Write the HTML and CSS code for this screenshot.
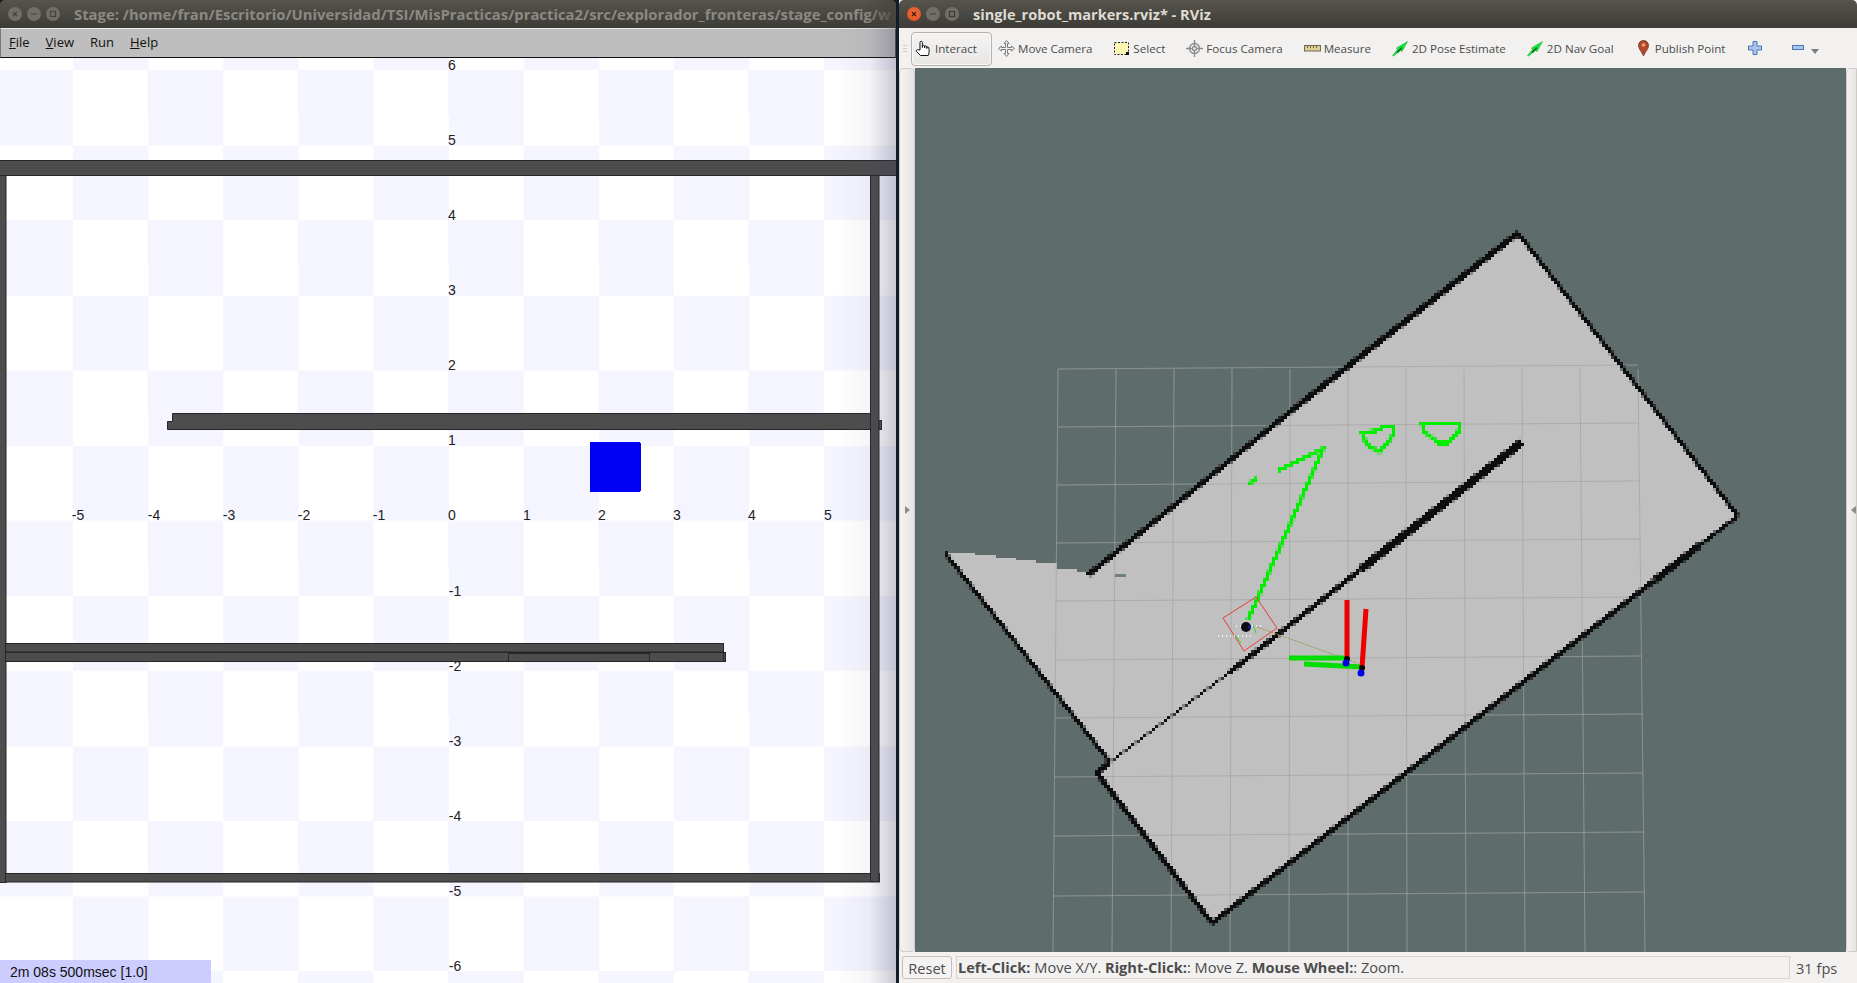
FILE: index.html
```html
<!DOCTYPE html>
<html lang="es">
<head>
<meta charset="utf-8">
<title>Stage and RViz</title>
<link rel="stylesheet" href="styles.css">
</head>
<body>
<div class="desktop">
  <section class="stage">
    <header class="titlebar titlebar-stage">
      <div class="winbtns">
        <span class="winbtn"><svg viewBox="0 0 14 14"><path class="mark-dim" d="M5 5l4 4M9 5l-4 4"/></svg></span>
        <span class="winbtn"><svg viewBox="0 0 14 14"><path class="mark-dim" d="M4 7h6"/></svg></span>
        <span class="winbtn"><svg viewBox="0 0 14 14"><rect class="mark-dim" x="4.5" y="4.5" width="5" height="5"/></svg></span>
      </div>
      <div class="title title-dim">Stage: /home/fran/Escritorio/Universidad/TSI/MisPracticas/practica2/src/explorador_fronteras/stage_config/w</div>
    </header>
    <nav class="menubar">
      <span class="menu"><u>F</u>ile</span>
      <span class="menu"><u>V</u>iew</span>
      <span class="menu">Run</span>
      <span class="menu"><u>H</u>elp</span>
    </nav>
    <div class="world">
      <svg class="world-svg" viewBox="0 58 896 925" width="896" height="925">
        <rect class="wall" x="-2" y="160.5" width="900" height="15"/>
        <rect class="wall" x="-2" y="175.5" width="8" height="707"/>
        <rect class="wall" x="5.5" y="873.5" width="874" height="8.5"/>
        <rect class="wall" x="870.5" y="175.5" width="8.5" height="706"/>
        <path class="wall" d="M172.5 413.5H870.5V429.500H167.500V421.500H172.500Z"/>
        <rect class="wall" x="879" y="420.5" width="2.5" height="9"/>
        <rect class="wall" x="5.5" y="643.5" width="718" height="8.5"/>
        <rect class="wall" x="5.5" y="652.5" width="718" height="9"/>
        <rect class="wall" x="723.5" y="652.5" width="2" height="9"/>
        <rect class="wall" x="508.5" y="653.5" width="141" height="8"/>
        <path class="blue" d="M590 442H640V443H641V491H640V492H590Z"/>
        <text class="lbl" x="78" y="520">-5</text><text class="lbl" x="154" y="520">-4</text><text class="lbl" x="229" y="520">-3</text><text class="lbl" x="304" y="520">-2</text><text class="lbl" x="379" y="520">-1</text><text class="lbl" x="452" y="520">0</text><text class="lbl" x="527" y="520">1</text><text class="lbl" x="602" y="520">2</text><text class="lbl" x="677" y="520">3</text><text class="lbl" x="752" y="520">4</text><text class="lbl" x="828" y="520">5</text>
        <text class="lbl" x="452" y="70">6</text><text class="lbl" x="452" y="145">5</text><text class="lbl" x="452" y="220">4</text><text class="lbl" x="452" y="295">3</text><text class="lbl" x="452" y="370">2</text><text class="lbl" x="452" y="445">1</text>
        <text class="lbl" x="455" y="596">-1</text><text class="lbl" x="455" y="671">-2</text><text class="lbl" x="455" y="746">-3</text><text class="lbl" x="455" y="821">-4</text><text class="lbl" x="455" y="896">-5</text><text class="lbl" x="455" y="971">-6</text>
      </svg>
      <div class="clock">2m 08s 500msec [1.0]</div>
    </div>
    <div class="shadow"></div>
  </section>
  <div class="gap"></div>
  <section class="rviz">
    <header class="titlebar">
      <div class="winbtns">
        <span class="winbtn winbtn-close"><svg viewBox="0 0 14 14"><path class="mark-close" d="M5 5l4 4M9 5l-4 4"/></svg></span>
        <span class="winbtn"><svg viewBox="0 0 14 14"><path class="mark" d="M4 7h6"/></svg></span>
        <span class="winbtn"><svg viewBox="0 0 14 14"><rect class="mark" x="4.5" y="4.5" width="5" height="5"/></svg></span>
      </div>
      <div class="title title-rviz">single_robot_markers.rviz* - RViz</div>
    </header>
    <div class="toolbar">
      <div class="grip"></div>
      <div class="tool tool-active">
        <svg class="icon" viewBox="0 0 17 17"><path class="hand" d="M5 10V2.500a1.200 1.200 0 0 1 2.400 0V7.500V6.500a1.100 1.100 0 0 1 2.200 0V8V7a1.100 1.100 0 0 1 2.200 0V8.500V8a1 1 0 0 1 2 0c.6 2.500 .4 5-.6 7.500H5.500L1.500 11.500c-.8-1 .5-2.400 1.600-1.700Z"/></svg>
        <span>Interact</span>
      </div>
      <div class="tool tool-move">
        <svg class="icon" viewBox="0 0 17 17"><path class="move" d="M8.500 .5L11 3.500H9.500V7.500H13.500V6L16.500 8.500L13.500 11V9.500H9.500V13.500H11L8.500 16.500L6 13.500H7.500V9.500H3.500V11L.5 8.500L3.500 6V7.500H7.500V3.500H6Z"/></svg>
        <span>Move Camera</span>
      </div>
      <div class="tool">
        <svg class="icon" viewBox="0 0 17 17"><rect class="select" x="1.500" y="2.500" width="14" height="12"/><rect class="select-h" x="13" y="12" width="3" height="3"/></svg>
        <span>Select</span>
      </div>
      <div class="tool">
        <svg class="icon" viewBox="0 0 17 17"><circle class="focus" cx="8.500" cy="8.500" r="5"/><circle class="focus" cx="8.500" cy="8.500" r="2"/><path class="focus" d="M8.500 0V6M8.500 11V17M0 8.500H6M11 8.500H17"/></svg>
        <span>Focus Camera</span>
      </div>
      <div class="tool">
        <svg class="icon" viewBox="0 0 17 17"><rect class="ruler" x=".5" y="5.500" width="16" height="5.500"/><path class="ruler-ticks" d="M3.500 6V8M6.500 6V8M9.500 6V8M12.500 6V8"/></svg>
        <span>Measure</span>
      </div>
      <div class="tool">
        <svg class="icon" viewBox="0 0 17 17"><path class="goal" d="M.5 15.500L5.500 9.500L4.500 8L15.500 1.500L10 11.500L8.500 10.500L1.500 16Z"/><path class="goal-line" d="M5 12.500L10 7.500"/></svg>
        <span>2D Pose Estimate</span>
      </div>
      <div class="tool">
        <svg class="icon" viewBox="0 0 17 17"><path class="goal" d="M.5 15.500L5.500 9.500L4.500 8L15.500 1.500L10 11.500L8.500 10.500L1.500 16Z"/><path class="goal-line" d="M5 12.500L10 7.500"/></svg>
        <span>2D Nav Goal</span>
      </div>
      <div class="tool tool-pin">
        <svg class="icon" viewBox="0 0 17 17"><path class="pin" d="M8.500 .5C5.500 .5 3.500 2.700 3.500 5.500C3.500 9 7 12 8.500 16C10 12 13.500 9 13.500 5.500C13.500 2.700 11.500 .5 8.500 .5Z"/><circle class="pin-dot" cx="8.500" cy="5" r="1.800"/></svg>
        <span>Publish Point</span>
      </div>
      <svg class="icon icon-plus" viewBox="0 0 14 14"><path class="plusmin" d="M5 .5H9V5H13.500V9H9V13.500H5V9H.5V5H5Z"/></svg>
      <svg class="icon icon-minus" viewBox="0 0 12 6"><rect class="plusmin" x=".5" y=".5" width="11" height="4"/></svg>
      <span class="drop"></span>
    </div>
    <div class="middle">
      <div class="handle"><span class="tri tri-right"></span></div>
      <svg class="view" viewBox="915 68 931 884" width="931" height="884">
        <defs>
          <filter id="cells" filterUnits="userSpaceOnUse" x="915" y="68" width="931" height="884">
            <feFlood x="916" y="69" width="1" height="1"/>
            <feComposite width="3" height="3"/>
            <feTile result="grain"/>
            <feComposite in="SourceGraphic" in2="grain" operator="in"/>
            <feMorphology operator="dilate" radius="1"/>
          </filter>
        </defs>
        <g class="grid">
          <path d="M1058 369L1053 952M1116 369L1112 952M1174 369L1171 952M1232 369L1230 952M1290 369L1289 952M1348 369L1348 952M1406 369L1407 952M1464 369L1466 952M1522 369L1525 952M1580 369L1585 952M1638 369L1645 952"/>
          <path d="M1058 369L1638 365M1058 427L1639 423M1057 485L1640 481M1057 543L1640 539M1056 601L1641 597M1056 660L1642 656M1055 718L1643 714M1054 777L1643 773M1054 836L1644 832M1053 896L1645 892"/>
        </g>
        <path class="free" d="M945 553H975V555H996V558H1016V560H1036V563H1057V569H1077V572H1088V575L1518 233L1738 516L1212 923L1097 773L1110 762Z"/>
        <g class="grid grid-free">
          <path d="M1058 369L1053 952M1116 369L1112 952M1174 369L1171 952M1232 369L1230 952M1290 369L1289 952M1348 369L1348 952M1406 369L1407 952M1464 369L1466 952M1522 369L1525 952M1580 369L1585 952M1638 369L1645 952"/>
          <path d="M1058 369L1638 365M1058 427L1639 423M1057 485L1640 481M1057 543L1640 539M1056 601L1641 597M1056 660L1642 656M1055 718L1643 714M1054 777L1643 773M1054 836L1644 832M1053 896L1645 892"/>
        </g>
        <g class="obst">
          <path class="w4" d="M945 553L1110 762"/>
          <path class="w5" d="M1110 762L1097 773L1212 923"/>
          <path class="w5" d="M1088 575L1300 404"/>
          <path class="w6" d="M1300 404L1518 233"/>
          <path class="w4" d="M1518 233L1738 516"/>
          <path class="w4" d="M1738 516L1700 545"/>
          <path class="w7" d="M1700 545L1655 580"/>
          <path class="w5" d="M1655 580L1212 923"/>
          <path class="w2" d="M1110 762L1230 672"/>
          <path class="w5" d="M1230 672L1360 570"/>
          <path class="w8" d="M1360 570L1522 442"/>
        </g>
        <rect class="spot" x="1115" y="574" width="11" height="3"/>
        <g class="path">
          <path d="M1248 620L1323 449L1277 471"/>
          <path d="M1248 484L1258 478"/>
          <path d="M1362 433L1375 431L1385 426H1394V434L1380 452L1367 445Z"/>
          <path d="M1422 423H1460L1458 433L1448 443H1438L1424 431Z"/>
        </g>
        <path class="fp" d="M1256 597L1277 628L1244 651L1223 618Z"/>
        <path class="link" d="M1257 627L1357 663"/>
        <path class="thin-green" d="M1253 625L1256 633M1235 635L1241 643"/>
        <path class="dots" d="M1236 626H1262M1218 636H1251"/>
        <circle class="robot" cx="1246" cy="627" r="5"/>
        <circle class="robot-blue" cx="1249" cy="627" r="1.500"/>
        <path class="tf-g" d="M1289 658H1347M1304 664L1362 667"/>
        <path class="tf-r" d="M1347 600V658M1366 609L1362 668"/>
        <circle class="tf-k" cx="1347" cy="659" r="3"/>
        <circle class="tf-k" cx="1362" cy="668" r="3"/>
        <circle class="tf-b" cx="1346" cy="663" r="3.500"/>
        <circle class="tf-b" cx="1361" cy="673" r="3.500"/>
      </svg>
      <div class="handle handle-right"><span class="tri tri-left"></span></div>
    </div>
    <footer class="statusbar">
      <button class="reset">Reset</button>
      <div class="hint"><b>Left-Click:</b> Move X/Y. <b>Right-Click:</b>: Move Z. <b>Mouse Wheel:</b>: Zoom.</div>
      <div class="fps">31 fps</div>
    </footer>
  </section>
</div>
</body>
</html>
```

FILE: styles.css
```css
* { box-sizing: border-box; }
html, body { margin: 0; padding: 0; height: 100%; overflow: hidden; background: #111d2a; }
body { font-family: "Open Sans", "Noto Sans", sans-serif; }
.desktop { display: flex; width: 1857px; height: 983px; }

/* windows */
.stage { position: relative; width: 896px; height: 983px; display: flex; flex-direction: column; overflow: hidden; }
.gap { width: 3px; background: #111d2a; }
.rviz { flex: 1; min-width: 0; height: 983px; display: flex; flex-direction: column; background: #f2f1f0; }

.titlebar { height: 28px; display: flex; align-items: center; background: linear-gradient(#57544c, #3c3b37); border-radius: 5px 5px 0 0; flex: none; position: relative; overflow: hidden; }
.titlebar-stage::after { content: ""; position: absolute; right: 0; top: 0; width: 30px; height: 100%; background: linear-gradient(90deg, rgba(67,65,60,0), rgba(70,68,63,.8) 85%); }
.winbtns { display: flex; gap: 5px; padding-left: 8px; align-items: center; }
.winbtn { width: 14px; height: 14px; border-radius: 50%; background: #6f6e69; display: block; }
.winbtn svg { display: block; width: 14px; height: 14px; }
.winbtn-close { background: radial-gradient(circle at 50% 40%, #f0703f, #dc4a1c); }
.mark-dim, .mark { fill: none; stroke: #3c3b37; stroke-width: 1.2; }
.mark-dim { stroke: #44433f; }
.mark-close { fill: none; stroke: #4a1a08; stroke-width: 1.3; }
.title { font-weight: 700; white-space: nowrap; }
.title-dim { color: #8b8984; margin-left: 14px; font-size: 14.850px; }
.title-rviz { color: #dfdbd2; margin-left: 14px; font-size: 14.600px; }

/* stage */
.menubar { height: 30px; flex: none; display: flex; align-items: center; gap: 16px; padding: 0 0 2px 8px; background: #bebebe; border-top: 1px solid #ececec; border-left: 1px solid #777; border-right: 1px solid #555; border-bottom: 1px solid #111; font-size: 13px; color: #111; }
.world { position: relative; flex: 1; min-height: 0; background-color: #fff; background-image: repeating-conic-gradient(#f5f5ff 0 25%, #fff 0 50%); background-size: 150.2px 150.2px; background-position: 73px 12px; }
.world-svg { display: block; }
.wall { fill: #4d4d4d; stroke: #26262a; stroke-width: 1; }
.blue { fill: #0000f5; }
.lbl { font-family: "Liberation Sans", sans-serif; font-size: 14px; fill: #222; text-anchor: middle; }
.clock { position: absolute; left: 0; bottom: 0; width: 211px; height: 23px; background: #ccccff; color: #111; font-family: "Liberation Sans", sans-serif; font-size: 14px; line-height: 25px; padding-left: 10px; }
.shadow { position: absolute; right: 0; top: 28px; bottom: 0; width: 60px; background: linear-gradient(90deg, rgba(70,70,100,0), rgba(70,70,100,.05) 55%, rgba(60,60,90,.28)); pointer-events: none; }

/* rviz toolbar */
.toolbar { height: 40px; flex: none; display: flex; align-items: center; position: relative; padding-left: 12px; color: #4c4c4c; font-size: 11.600px; background: #f2f1f0; }
.grip { position: absolute; left: 4px; top: 17px; width: 4px; height: 7px; background: repeating-linear-gradient(#cfcdca 0 1px, transparent 1px 3px); }
.tool { display: flex; align-items: center; gap: 3px; margin-right: 21px; white-space: nowrap; height: 34px; }
.tool-active { width: 81px; margin-right: 6px; padding-left: 3px; margin-top: 1px; border: 1px solid #b5b2ad; border-radius: 4px; background: linear-gradient(#f4f3f2, #e8e7e5); box-shadow: inset 0 0 0 1px #f8f8f7; }
.tool-move { letter-spacing: -.05px; }
.tool-pin { margin-left: 0; margin-right: 23px; }
.icon { width: 17px; height: 17px; display: block; flex: none; }
.hand { fill: #fff; stroke: #111; stroke-width: 1; }
.move { fill: #efefef; stroke: #7a7a7a; stroke-width: 1; }
.select { fill: #fdf6b2; stroke: #222; stroke-width: 1; stroke-dasharray: 2 1.500; }
.select-h { fill: #111; }
.focus { fill: none; stroke: #8a8a8a; stroke-width: 1.300; }
.ruler { fill: #dccf94; stroke: #6f6a55; stroke-width: 1; }
.ruler-ticks { fill: none; stroke: #6f6a55; stroke-width: 1; }
.goal { fill: #11e83c; stroke: #0ca52c; stroke-width: .5; }
.goal-line { fill: none; stroke: #0a5a1c; stroke-width: 1.500; }
.pin { fill: #b5482a; stroke: #6e3a22; stroke-width: .8; }
.pin-dot { fill: #e8a48c; }
.icon-plus { width: 14px; height: 14px; margin-right: 30px; }
.icon-minus { width: 12px; height: 6px; margin-right: 7px; }
.plusmin { fill: #a9c4e6; stroke: #4a78b8; stroke-width: 1; }
.drop { width: 0; height: 0; border-left: 4px solid transparent; border-right: 4px solid transparent; border-top: 5px solid #7d7d7d; margin-top: 6px; }

/* middle */
.middle { flex: 1; min-height: 0; display: flex; }
.handle { width: 16px; padding: 1px; flex: none; display: flex; align-items: center; justify-content: center; border: 1px solid #cfccc8; border-radius: 4px; background: linear-gradient(90deg, #f4f3f2, #e6e5e3); }
.handle-right { width: 11px; border-radius: 4px 0 0 4px; justify-content: flex-end; padding-right: 0; }
.view { display: block; flex: none; background: #5e6d6b; }
.tri { width: 0; height: 0; border-top: 4px solid transparent; border-bottom: 4px solid transparent; }
.tri-right { border-left: 5px solid #8b8b8b; }
.tri-left { border-right: 5px solid #8b8b8b; }

.grid path { fill: none; stroke: #9a9f9e; stroke-width: 1; opacity: .42; }
.grid-free path { stroke: #9b9b9b; opacity: .55; }
.free { fill: #c0c0c0; shape-rendering: crispEdges; }
.obst { filter: url(#cells); }
.obst path { fill: none; stroke: #0e0e0e; stroke-linejoin: miter; }
.w2 { stroke-width: 2; }
.w4 { stroke-width: 4; }
.w5 { stroke-width: 5; }
.w6 { stroke-width: 6; }
.w7 { stroke-width: 7; }
.w8 { stroke-width: 8; }
.spot { fill: #6f817e; }
.path { filter: url(#cells); }
.path path { fill: none; stroke: #00ee00; stroke-width: 4; }
.fp { fill: none; stroke: #ee3a3a; stroke-width: 1; }
.link { fill: none; stroke: #9a9a50; stroke-width: 1; stroke-dasharray: 2 1; }
.thin-green { fill: none; stroke: #22dd22; stroke-width: 1; }
.dots { fill: none; stroke: #fff; stroke-width: 1.500; stroke-dasharray: 1 3; }
.robot { fill: #0c0c12; }
.robot-blue { fill: #1010c0; }
.tf-g { fill: none; stroke: #00dd00; stroke-width: 5; }
.tf-r { fill: none; stroke: #ee0000; stroke-width: 5; }
.tf-k { fill: #050505; }
.tf-b { fill: #0000ee; }

/* status */
.statusbar { height: 31px; flex: none; display: flex; align-items: center; padding: 0 0 0 3px; gap: 4px; background: #f2f1f0; color: #4c4c4c; font-size: 14.600px; }
.reset { width: 50px; height: 23px; padding: 0; font: inherit; color: #4c4c4c; background: #f4f3f2; border: 1px solid #c4c1bc; border-radius: 3px; }
.hint { width: 834px; height: 23px; line-height: 21px; padding-left: 1px; border: 1px solid #d6d4d0; white-space: nowrap; overflow: hidden; }
.fps { padding-left: 2px; }
```
